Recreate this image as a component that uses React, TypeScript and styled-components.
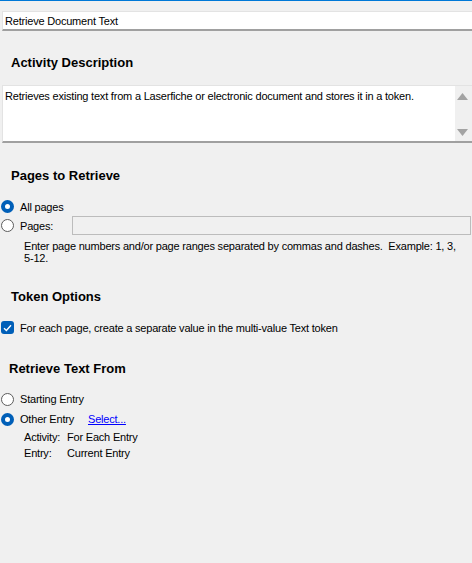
import styled, { createGlobalStyle } from "styled-components";

const GlobalStyle = createGlobalStyle`
  html, body {
    margin: 0;
    padding: 0;
    background: #f0f0f0;
    overflow: hidden;
  }
  body {
    font-family: "Liberation Sans", Arial, sans-serif;
    font-size: 11px;
    letter-spacing: -0.2px;
    color: #000;
  }
`;

const Page = styled.div`
  width: 472px;
  height: 563px;
  border-top: 1px solid #0078d7;
  box-sizing: border-box;
  padding-top: 10px;
  overflow: hidden;
`;

const Field = styled.div<{ $tall?: boolean }>`
  margin-left: 2px;
  margin-right: -6px;
  height: ${(p) => (p.$tall ? "58px" : "20px")};
  background: #fff;
  border-top: 1px solid #e3e3e3;
  border-left: 1px solid #e3e3e3;
  border-bottom: 2px solid #a0a0a0;
  box-sizing: border-box;
  display: flex;
  align-items: ${(p) => (p.$tall ? "stretch" : "center")};
  padding-left: 2px;
`;

const FieldText = styled.div`
  flex: 1;
  padding-top: 1px;
  line-height: 13px;
`;

const AreaText = styled.div`
  flex: 1;
  padding-top: 4px;
  line-height: 13px;
`;

const ScrollBar = styled.div`
  width: 17px;
  margin-right: 6px;
  background: #f0f0f0;
  display: flex;
  flex-direction: column;
  justify-content: space-between;
  align-items: flex-start;
  padding: 7px 0 5px 2px;
  box-sizing: border-box;
`;

const Heading = styled.h3<{ $indent?: number; $top: number }>`
  margin: ${(p) => p.$top}px 0 0 ${(p) => p.$indent ?? 11}px;
  font-size: 13px;
  font-weight: bold;
  letter-spacing: 0;
  line-height: 16px;
`;

const Options = styled.div<{ $top: number }>`
  margin-top: ${(p) => p.$top}px;
  display: flex;
  flex-direction: column;
`;

const OptionRow = styled.label<{ $h?: number }>`
  display: flex;
  align-items: center;
  height: ${(p) => p.$h ?? 19}px;
  padding-left: 1px;
  gap: 6px;
`;

const Label = styled.span<{ $w?: number }>`
  width: ${(p) => (p.$w ? `${p.$w}px` : "auto")};
  flex: none;
`;

const Radio = styled.span<{ $checked?: boolean }>`
  width: 13px;
  height: 13px;
  border-radius: 50%;
  box-sizing: border-box;
  flex: none;
  background: #fff;
  border: ${(p) => (p.$checked ? "4px solid #005fb8" : "1px solid #5c5c5c")};
`;

const Check = styled.span`
  width: 13px;
  height: 13px;
  border-radius: 3px;
  background: #005fb8;
  flex: none;
  display: flex;
  align-items: center;
  justify-content: center;
`;

const PagesInput = styled.div`
  width: 399px;
  height: 19px;
  border: 1px solid #bcbcbc;
  box-sizing: border-box;
  background: #f0f0f0;
`;

const Hint = styled.p`
  margin: 5px 0 0 24px;
  width: 440px;
  line-height: 12px;
`;

const Link = styled.a`
  color: #0000ff;
  text-decoration: underline;
  cursor: pointer;
`;

const Details = styled.div`
  display: grid;
  grid-template-columns: 43px auto;
  padding-left: 24px;
  row-gap: 3px;
  line-height: 13px;
  margin-top: 2px;
`;

const Arrow = ({ up }: { up?: boolean }) => (
  <svg width="11" height="7" viewBox="0 0 11 7">
    <path d={up ? "M5.5 0 L11 7 L0 7 Z" : "M0 0 L11 0 L5.5 7 Z"} fill="#a3a3a3" />
  </svg>
);

export default function App() {
  return (
    <>
      <GlobalStyle />
      <Page>
        <Field>
          <FieldText>Retrieve Document Text</FieldText>
        </Field>

        <Heading $top={24}>Activity Description</Heading>
        <Field $tall style={{ marginTop: 14 }}>
          <AreaText>
            Retrieves existing text from a Laserfiche or electronic document and stores it in a token.
          </AreaText>
          <ScrollBar>
            <Arrow up />
            <Arrow />
          </ScrollBar>
        </Field>

        <Heading $top={25}>Pages to Retrieve</Heading>
        <Options $top={13}>
          <OptionRow>
            <Radio $checked />
            All pages
          </OptionRow>
          <OptionRow>
            <Radio />
            <Label $w={46}>Pages:</Label>
            <PagesInput />
          </OptionRow>
        </Options>
        <Hint>
          Enter page numbers and/or page ranges separated by commas and dashes.&nbsp; Example: 1, 3,
          5-12.
        </Hint>

        <Heading $top={25}>Token Options</Heading>
        <Options $top={13}>
          <OptionRow>
            <Check>
              <svg width="9" height="8" viewBox="0 0 9 8">
                <path d="M1 4.2 L3.4 6.5 L8 1.3" stroke="#fff" strokeWidth="1.4" fill="none" />
              </svg>
            </Check>
            For each page, create a separate value in the multi-value Text token
          </OptionRow>
        </Options>

        <Heading $top={24} $indent={9}>
          Retrieve Text From
        </Heading>
        <Options $top={12}>
          <OptionRow $h={20}>
            <Radio />
            Starting Entry
          </OptionRow>
          <OptionRow $h={20}>
            <Radio $checked />
            <Label $w={62}>Other Entry</Label>
            <Link>Select...</Link>
          </OptionRow>
        </Options>
        <Details>
          <span>Activity:</span>
          <span>For Each Entry</span>
          <span>Entry:</span>
          <span>Current Entry</span>
        </Details>
      </Page>
    </>
  );
}
